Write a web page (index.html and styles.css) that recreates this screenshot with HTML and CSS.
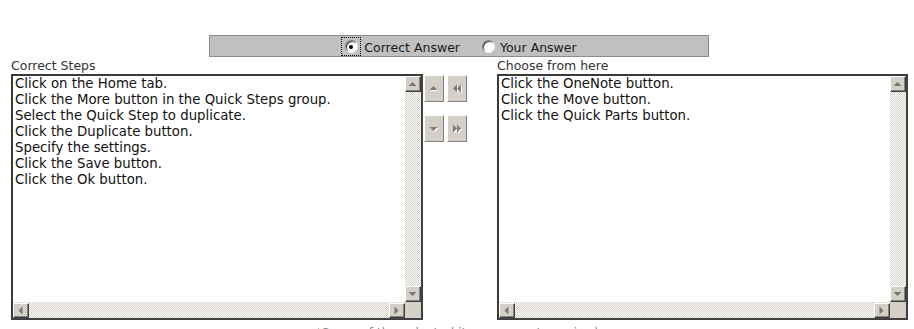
FILE: index.html
```html
<!DOCTYPE html>
<html>
<head>
<meta charset="utf-8">
<title>Correct Steps</title>
<link rel="stylesheet" href="styles.css">
</head>
<body>

<div class="answer-bar">
	<label class="opt">
		<span class="focus"><span class="radio checked"></span></span>
		<span class="opt-text">Correct Answer</span>
	</label>
	<label class="opt opt-second">
		<span class="radio"></span>
		<span class="opt-text">Your Answer</span>
	</label>
</div>

<div class="lists">
	<div class="col">
		<div class="caption">Correct Steps</div>
		<div class="listbox">
			<div class="items">
				<div>Click on the Home tab.</div>
				<div>Click the More button in the Quick Steps group.</div>
				<div>Select the Quick Step to duplicate.</div>
				<div>Click the Duplicate button.</div>
				<div>Specify the settings.</div>
				<div>Click the Save button.</div>
				<div>Click the Ok button.</div>
			</div>
			<div class="vscroll">
				<span class="sb-btn"><svg width="14" height="14" viewBox="0 0 14 14"><polygon points="2.5,9 10.5,9 6.5,5" fill="#777"/></svg></span>
				<span class="track"></span>
				<span class="sb-btn"><svg width="14" height="14" viewBox="0 0 14 14"><polygon points="2.5,5 10.5,5 6.5,9" fill="#777"/></svg></span>
			</div>
			<div class="hscroll">
				<span class="sb-btn"><svg width="14" height="14" viewBox="0 0 14 14"><polygon points="8.5,2.5 8.5,10.5 4.5,6.5" fill="#777"/></svg></span>
				<span class="track"></span>
				<span class="sb-btn"><svg width="14" height="14" viewBox="0 0 14 14"><polygon points="4.5,2.5 4.5,10.5 8.5,6.5" fill="#777"/></svg></span>
			</div>
			<div class="corner"></div>
		</div>
	</div>

	<div class="movers">
		<span class="move-btn"><svg width="18" height="25" viewBox="0 0 18 25"><polygon points="4.5,14 12.5,14 8.5,10" fill="#fff" transform="translate(1,1)"/><polygon points="4.5,14 12.5,14 8.5,10" fill="#7c7c7c"/></svg></span>
		<span class="move-btn"><svg width="18" height="25" viewBox="0 0 18 25"><g transform="translate(1,1)" fill="#fff"><polygon points="9,8.5 9,16.5 5,12.5"/><polygon points="13,8.5 13,16.5 9,12.5"/></g><g fill="#7c7c7c"><polygon points="9,8.5 9,16.5 5,12.5"/><polygon points="13,8.5 13,16.5 9,12.5"/></g></svg></span>
		<span class="move-btn"><svg width="18" height="25" viewBox="0 0 18 25"><polygon points="4.5,11 12.5,11 8.5,15" fill="#fff" transform="translate(1,1)"/><polygon points="4.5,11 12.5,11 8.5,15" fill="#7c7c7c"/></svg></span>
		<span class="move-btn"><svg width="18" height="25" viewBox="0 0 18 25"><g transform="translate(1,1)" fill="#fff"><polygon points="5,8.5 5,16.5 9,12.5"/><polygon points="9,8.5 9,16.5 13,12.5"/></g><g fill="#7c7c7c"><polygon points="5,8.5 5,16.5 9,12.5"/><polygon points="9,8.5 9,16.5 13,12.5"/></g></svg></span>
	</div>

	<div class="col col-right">
		<div class="caption">Choose from here</div>
		<div class="listbox">
			<div class="items">
				<div>Click the OneNote button.</div>
				<div>Click the Move button.</div>
				<div>Click the Quick Parts button.</div>
			</div>
			<div class="vscroll">
				<span class="sb-btn"><svg width="14" height="14" viewBox="0 0 14 14"><polygon points="2.5,9 10.5,9 6.5,5" fill="#777"/></svg></span>
				<span class="track"></span>
				<span class="sb-btn"><svg width="14" height="14" viewBox="0 0 14 14"><polygon points="2.5,5 10.5,5 6.5,9" fill="#777"/></svg></span>
			</div>
			<div class="hscroll">
				<span class="sb-btn"><svg width="14" height="14" viewBox="0 0 14 14"><polygon points="8.5,2.5 8.5,10.5 4.5,6.5" fill="#777"/></svg></span>
				<span class="track"></span>
				<span class="sb-btn"><svg width="14" height="14" viewBox="0 0 14 14"><polygon points="4.5,2.5 4.5,10.5 8.5,6.5" fill="#777"/></svg></span>
			</div>
			<div class="corner"></div>
		</div>
	</div>
</div>

<div class="note">*Some of the selected items are not required.</div>

</body>
</html>
```

FILE: styles.css
```css
body {
	margin: 0;
	padding-top: 35px;
	font-family: "DejaVu Sans", Verdana, sans-serif;
	font-size: 12.5px;
	color: #111;
	background: #fff;
	overflow: hidden;
}
.answer-bar {
	margin-left: 209px;
	width: 500px;
	height: 22px;
	box-sizing: border-box;
	background: #c0c0c0;
	border: 1px solid #8c8c8c;
	display: flex;
	justify-content: center;
	align-items: center;
	padding-top: 1px;
}
.opt {
	display: flex;
	align-items: center;
	color: #1a1a1a;
}
.opt-text {
	padding-top: 2px;
}
.opt-second {
	margin-left: 22px;
}
.opt-second .opt-text {
	margin-left: 5px;
}
.focus {
	display: flex;
	align-items: center;
	justify-content: center;
	width: 20px;
	height: 19px;
	box-sizing: border-box;
	border: 1px dotted #000;
	margin-right: 3px;
}
.radio {
	width: 13px;
	height: 13px;
	box-sizing: border-box;
	border-radius: 50%;
	background: #fff;
	border: 1px solid;
	border-color: #808080 #f4f4f4 #f4f4f4 #808080;
	box-shadow: inset 1px 1px 0 #404040;
	display: flex;
	align-items: center;
	justify-content: center;
	flex: none;
}
.radio.checked::after {
	content: "";
	width: 4px;
	height: 4px;
	border-radius: 50%;
	background: #000;
}
.lists {
	display: flex;
	padding-left: 11px;
	margin-top: 1px;
}
.caption {
	height: 16px;
	line-height: 16px;
	color: #333;
}
.listbox {
	width: 412px;
	height: 246px;
	box-sizing: border-box;
	border: 2px solid;
	border-color: #3a3a3a #404040 #404040 #3a3a3a;
	display: grid;
	grid-template-columns: 1fr 16px;
	grid-template-rows: 1fr 16px;
	background: #fff;
}
.col-right .listbox {
	width: 411px;
}
.items {
	padding-left: 2px;
	font-size: 13.3px;
	line-height: 16px;
	white-space: nowrap;
	overflow: hidden;
	color: #111;
}
.vscroll {
	display: flex;
	flex-direction: column;
}
.hscroll {
	display: flex;
	border-top: 1px solid #e4e2dc;
}
.track {
	flex: 1;
	background: repeating-conic-gradient(#d4d0c8 0 25%, #fff 0 50%) 0 0 / 2px 2px;
}
.sb-btn {
	width: 16px;
	height: 16px;
	box-sizing: border-box;
	background: #d4d0c8;
	border: 1px solid;
	border-color: #fff #404040 #404040 #fff;
	box-shadow: inset -1px -1px 0 #808080;
	display: flex;
	align-items: center;
	justify-content: center;
	flex: none;
}
.hscroll .sb-btn {
	height: 15px;
}
.corner {
	background: #d4d0c8;
}
.movers {
	display: grid;
	grid-template-columns: 20px 20px;
	grid-auto-rows: 27px;
	column-gap: 3px;
	row-gap: 13px;
	margin-left: 1px;
	margin-top: 17px;
	align-self: flex-start;
}
.move-btn {
	box-sizing: border-box;
	background: #d4d0c8;
	border: 1px solid;
	border-color: #fff #808080 #808080 #fff;
	display: flex;
	align-items: center;
	justify-content: center;
}
.col-right {
	margin-left: 30px;
}
.note {
	margin-top: 5px;
	text-align: center;
	width: 917px;
	color: #8a8a8a;
	line-height: 15px;
}
```
